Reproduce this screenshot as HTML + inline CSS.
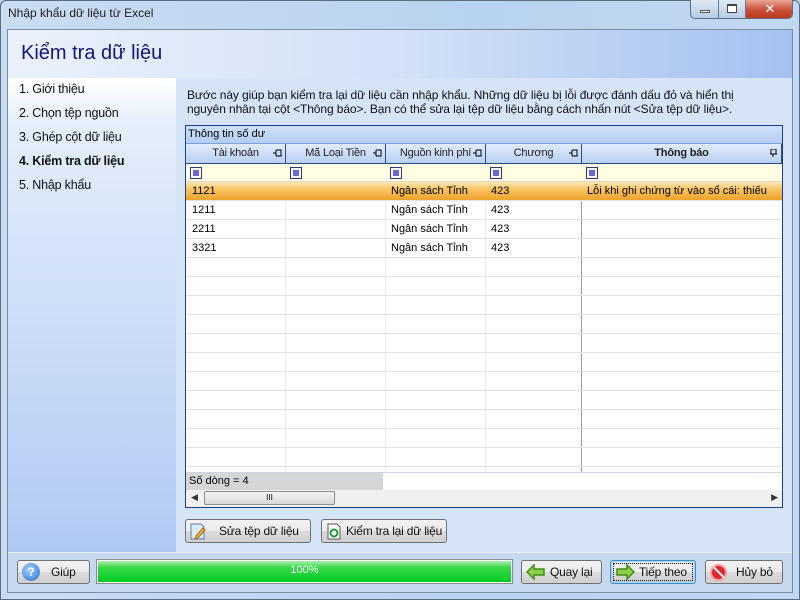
<!DOCTYPE html><html><head><meta charset="utf-8"><style>
*{box-sizing:border-box;margin:0;padding:0}
body{width:800px;height:600px;overflow:hidden;font-family:"Liberation Sans","DejaVu Sans",sans-serif;font-size:12px;color:#000;background:#bcd2ee;position:relative;white-space:nowrap}
.abs{position:absolute}
.frame{left:0;top:0;width:800px;height:600px;background:linear-gradient(90deg,#c9dcf2,#b8d3f0 60%,#c1d8f2);border:1px solid #5a6c82;border-radius:6px 6px 0 0}
.title{left:8px;top:6px;font-size:12px;color:#1e1e1e}
.inner{left:7px;top:29px;width:786px;height:564px;border:1px solid #7b8ea6;background:#d6e4f7}
.hdr{left:8px;top:30px;width:784px;height:48px;background:linear-gradient(90deg,#eaf1fb,#d2e1f7 50%,#a5c1f0)}
.hdr span{position:absolute;left:13px;top:12px;font-size:20px;color:#15157a}
.nav{left:8px;top:78px;width:168px;height:474px;background:linear-gradient(#fff,#e4eefb 10%,#b0c9f3)}
.nav div{position:absolute;left:11px;font-size:12.5px;color:#111;letter-spacing:-0.2px}
.desc{left:187px;top:88px;font-size:12px;line-height:14px;color:#111;letter-spacing:-0.1px}
.grid{left:185px;top:125px;width:598px;height:383px;border:1px solid #1b3f8f;background:#fff}
.cap{left:0;top:0;width:596px;height:18px;background:linear-gradient(#cfe0f8,#b3cdf4);font-size:11px;padding:2px 2px;border-bottom:1px solid #7fa1da}
.th{top:18px;height:20px;background:linear-gradient(#e2ecfb,#b8cff4);border-right:1px solid #2a4c8e;border-bottom:1px solid #2a4c8e;text-align:center;font-size:11px;line-height:19px;color:#222;letter-spacing:-0.2px}
.pin{position:absolute;right:3px;top:5px;width:9px;height:8px}
.filt{left:0;top:38px;width:596px;height:18px;background:#fffde2;border-bottom:1px solid #e0dcc0}
.fb{position:absolute;top:3px;width:12px;height:12px;border:1px solid #2a3a7a;background:#fff}
.fb i{position:absolute;left:2px;top:2px;width:6px;height:6px;background:#6b65d6}
.row{left:0;width:596px;height:19px;border-bottom:1px solid #e3e3e3;font-size:11px;line-height:18px}
.row span{position:absolute;top:0}
.sel{background:linear-gradient(#fde7b5,#f8c464 40%,#eea22a)}
.vl{top:56px;width:1px;height:290px;background:#ececec}
.foot{left:0;top:346px;width:596px;height:18px;border-top:1px solid #cfd5dd;background:#fff}
.btn{height:24px;border:1px solid #707070;border-radius:3px;background:linear-gradient(#f2f2f2,#ebebeb 50%,#dcdcdc 50%,#cfcfcf);font-size:12px;line-height:22px;color:#111;letter-spacing:-0.2px}
</style></head><body>
<div class="abs frame"></div>
<div class="abs title">Nhập khẩu dữ liệu từ Excel</div>
<div class="abs" style="left:690px;top:0;width:103px;height:19px;border:1px solid #5d6e86;border-top:none;border-radius:0 0 5px 5px;background:linear-gradient(#dfe9f6,#b6cbe4);overflow:hidden">
<div class="abs" style="left:0;top:0;width:28px;height:19px;border-right:1px solid #6b7d96"><div class="abs" style="left:9px;top:10px;width:10px;height:3px;border:1px solid #555;background:#fff"></div></div>
<div class="abs" style="left:28px;top:0;width:27px;height:19px;border-right:1px solid #6b7d96"><div class="abs" style="left:8px;top:4px;width:10px;height:9px;border:1px solid #444;border-top-width:2px;background:#fff"></div></div>
<div class="abs" style="left:55px;top:0;width:48px;height:19px;background:linear-gradient(#e9a697,#c9523a 50%,#b73419);color:#fff;text-align:center;font-weight:bold;font-size:13px;line-height:18px">✕</div></div>
<div class="abs inner"></div>
<div class="abs hdr"><span>Kiểm tra dữ liệu</span></div>
<div class="abs nav">
<div style="top:4px">1. Giới thiệu</div><div style="top:28px">2. Chọn tệp nguồn</div><div style="top:52px">3. Ghép cột dữ liệu</div><div style="top:76px;font-weight:bold">4. Kiểm tra dữ liệu</div><div style="top:100px">5. Nhập khẩu</div></div>
<div class="abs desc">Bước này giúp bạn kiểm tra lại dữ liệu cần nhập khẩu. Những dữ liệu bị lỗi được đánh dấu đỏ và hiển thị<br>nguyên nhân tại cột &lt;Thông báo&gt;. Bạn có thể sửa lại tệp dữ liệu bằng cách nhấn nút &lt;Sửa tệp dữ liệu&gt;.</div>
<div class="abs grid">
<div class="abs cap">Thông tin số dư</div>
<div class="abs th" style="left:0;width:100px">Tài khoản<svg class="pin"><path d="M0 4h3M3 1v6M3 1h5v6H3" fill="none" stroke="#000"/></svg></div>
<div class="abs th" style="left:100px;width:100px">Mã Loại Tiền<svg class="pin"><path d="M0 4h3M3 1v6M3 1h5v6H3" fill="none" stroke="#000"/></svg></div>
<div class="abs th" style="left:200px;width:100px">Nguồn kinh phí<svg class="pin"><path d="M0 4h3M3 1v6M3 1h5v6H3" fill="none" stroke="#000"/></svg></div>
<div class="abs th" style="left:300px;width:96px">Chương<svg class="pin"><path d="M0 4h3M3 1v6M3 1h5v6H3" fill="none" stroke="#000"/></svg></div>
<div class="abs th" style="left:396px;width:200px;font-weight:bold">Thông báo<svg class="pin"><path d="M1 5h7M4 5v3M2 0h5v5H2z" fill="none" stroke="#000"/></svg></div>
<div class="abs filt"><div class="fb" style="left:4px"><i></i></div><div class="fb" style="left:104px"><i></i></div><div class="fb" style="left:204px"><i></i></div><div class="fb" style="left:304px"><i></i></div><div class="fb" style="left:400px"><i></i></div></div>
<div class="abs vl" style="left:99px"></div><div class="abs vl" style="left:199px"></div><div class="abs vl" style="left:299px"></div><div class="abs" style="left:395px;top:56px;width:1px;height:290px;background:#999"></div>
<div class="abs row sel" style="top:56px"><span style="left:6px">1121</span><span style="left:205px">Ngân sách Tỉnh</span><span style="left:305px">423</span><span style="left:401px">Lỗi khi ghi chứng từ vào sổ cái: thiếu</span></div>
<div class="abs row" style="top:75px"><span style="left:6px">1211</span><span style="left:205px">Ngân sách Tỉnh</span><span style="left:305px">423</span></div>
<div class="abs row" style="top:94px"><span style="left:6px">2211</span><span style="left:205px">Ngân sách Tỉnh</span><span style="left:305px">423</span></div>
<div class="abs row" style="top:113px"><span style="left:6px">3321</span><span style="left:205px">Ngân sách Tỉnh</span><span style="left:305px">423</span></div>
<div class="abs row" style="top:132px"></div><div class="abs row" style="top:151px"></div><div class="abs row" style="top:170px"></div><div class="abs row" style="top:189px"></div><div class="abs row" style="top:208px"></div><div class="abs row" style="top:227px"></div><div class="abs row" style="top:246px"></div><div class="abs row" style="top:265px"></div><div class="abs row" style="top:284px"></div><div class="abs row" style="top:303px"></div><div class="abs row" style="top:322px"></div>
<div class="abs foot"><div class="abs" style="left:0;top:0;width:197px;height:17px;background:#d6d6d6;font-size:11px;line-height:17px;padding-left:3px">Số dòng = 4</div></div>
<div class="abs" style="left:0;top:364px;width:596px;height:17px;background:#f0f0f0"><span class="abs" style="left:5px;top:2px;font-size:9px;color:#333">◀</span><div class="abs" style="left:18px;top:1px;width:131px;height:14px;border:1px solid #8f8f8f;border-radius:2px;background:linear-gradient(#f4f4f4,#d8d8d8);font-size:8px;text-align:center;line-height:12px">III</div><span class="abs" style="right:4px;top:2px;font-size:9px;color:#333">▶</span></div>
</div>
<div class="abs btn" style="left:185px;top:519px;width:126px"><svg class="abs" style="left:4px;top:3px" width="16" height="17"><path d="M1 1h10l3 3v12H1z" fill="#dbe9f8" stroke="#5a7fb0"/><path d="M6 13l7-8 2 2-7 8-3 1z" fill="#f2b632" stroke="#a0701a"/></svg><span class="abs" style="left:33px;top:0">Sửa tệp dữ liệu</span></div>
<div class="abs btn" style="left:321px;top:519px;width:126px"><svg class="abs" style="left:5px;top:3px" width="14" height="17"><path d="M1 1h9l3 3v12H1z" fill="#fff" stroke="#555"/><circle cx="7" cy="10" r="3.5" fill="none" stroke="#1e9a2c" stroke-width="2"/></svg><span class="abs" style="left:24px;top:0">Kiểm tra lại dữ liệu</span></div>
<div class="abs" style="left:8px;top:552px;width:784px;height:40px;background:#c6d9f1;border-top:1px solid #e8f0fb"></div>
<div class="abs btn" style="left:17px;top:560px;width:73px"><div class="abs" style="left:4px;top:2px;width:18px;height:18px;border-radius:50%;background:radial-gradient(circle at 40% 35%,#9fd0ff,#2a6fd0);color:#fff;font-weight:bold;text-align:center;line-height:18px;font-size:12px">?</div><span class="abs" style="left:33px;top:0">Giúp</span></div>
<div class="abs" style="left:96px;top:559px;width:417px;height:25px;border:1px solid #8c8c8c;background:#fff;padding:1px"><div style="width:100%;height:100%;background:linear-gradient(#aef0b0,#3ad84a 30%,#00cc22);color:#fff;text-align:center;font-size:11px;line-height:19px">100%</div></div>
<div class="abs btn" style="left:521px;top:560px;width:81px"><svg class="abs" style="left:4px;top:3px" width="20" height="16"><path d="M1 8l7-7v4h10v6H8v4z" fill="#8ed04c" stroke="#3f8e16" stroke-width="1.5"/></svg><span class="abs" style="left:28px;top:0">Quay lại</span></div>
<div class="abs btn" style="left:610px;top:560px;width:86px;border-color:#3c8fd0;box-shadow:inset 0 0 0 1px #9fd0f5"><div class="abs" style="left:2px;top:2px;right:2px;bottom:2px;border:1px dotted #000"></div><svg class="abs" style="left:4px;top:3px" width="20" height="16"><path d="M19 8l-7-7v4H2v6h10v4z" fill="#8ed04c" stroke="#3f8e16" stroke-width="1.5"/></svg><span class="abs" style="left:28px;top:0">Tiếp theo</span></div>
<div class="abs btn" style="left:705px;top:560px;width:78px"><div class="abs" style="left:4px;top:3px;width:17px;height:17px;border-radius:50%;background:#e0262a;border:2px solid #f3a0a0"><div class="abs" style="left:6px;top:-1px;width:2px;height:15px;background:#fff;transform:rotate(-45deg)"></div></div><span class="abs" style="left:30px;top:0">Hủy bỏ</span></div>
</body></html>
